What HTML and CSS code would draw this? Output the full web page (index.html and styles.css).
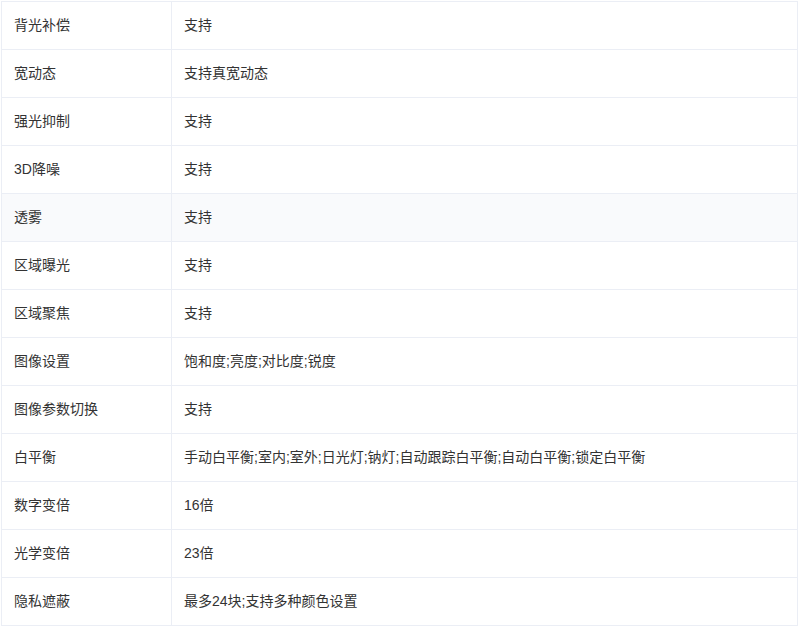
FILE: index.html
```html
<!DOCTYPE html>
<html>
	<head>
		<meta charset="UTF-8">
		<title>参数</title>
		<link rel="stylesheet" href="styles.css">
	</head>
	<body>
		<table class="param_table">
			<colgroup>
				<col class="param_name">
				<col>
			</colgroup>
			<tr><td>背光补偿</td><td>支持</td></tr>
			<tr><td>宽动态</td><td>支持真宽动态</td></tr>
			<tr><td>强光抑制</td><td>支持</td></tr>
			<tr><td>3D降噪</td><td>支持</td></tr>
			<tr class="hover"><td>透雾</td><td>支持</td></tr>
			<tr><td>区域曝光</td><td>支持</td></tr>
			<tr><td>区域聚焦</td><td>支持</td></tr>
			<tr><td>图像设置</td><td>饱和度;亮度;对比度;锐度</td></tr>
			<tr><td>图像参数切换</td><td>支持</td></tr>
			<tr><td>白平衡</td><td>手动白平衡;室内;室外;日光灯;钠灯;自动跟踪白平衡;自动白平衡;锁定白平衡</td></tr>
			<tr><td>数字变倍</td><td>16倍</td></tr>
			<tr><td>光学变倍</td><td>23倍</td></tr>
			<tr><td>隐私遮蔽</td><td>最多24块;支持多种颜色设置</td></tr>
		</table>
	</body>
</html>
```
FILE: styles.css
```css
*{padding: 0;margin: 0;}

body{background: #fff;font-family: "Liberation Sans", "Noto Sans CJK SC", sans-serif;font-size: 14px;color: #333;}

.param_table{margin: 1px 0 0 1px;width: 797px;border-collapse: collapse;table-layout: fixed;}
.param_table .param_name{width: 170px;}
.param_table td{height: 45px;padding: 0 12px 2px;border: 1px solid #ebeef5;vertical-align: middle;line-height: 20px;}
.param_table tr.hover td{background: #f9fafc;}
```
